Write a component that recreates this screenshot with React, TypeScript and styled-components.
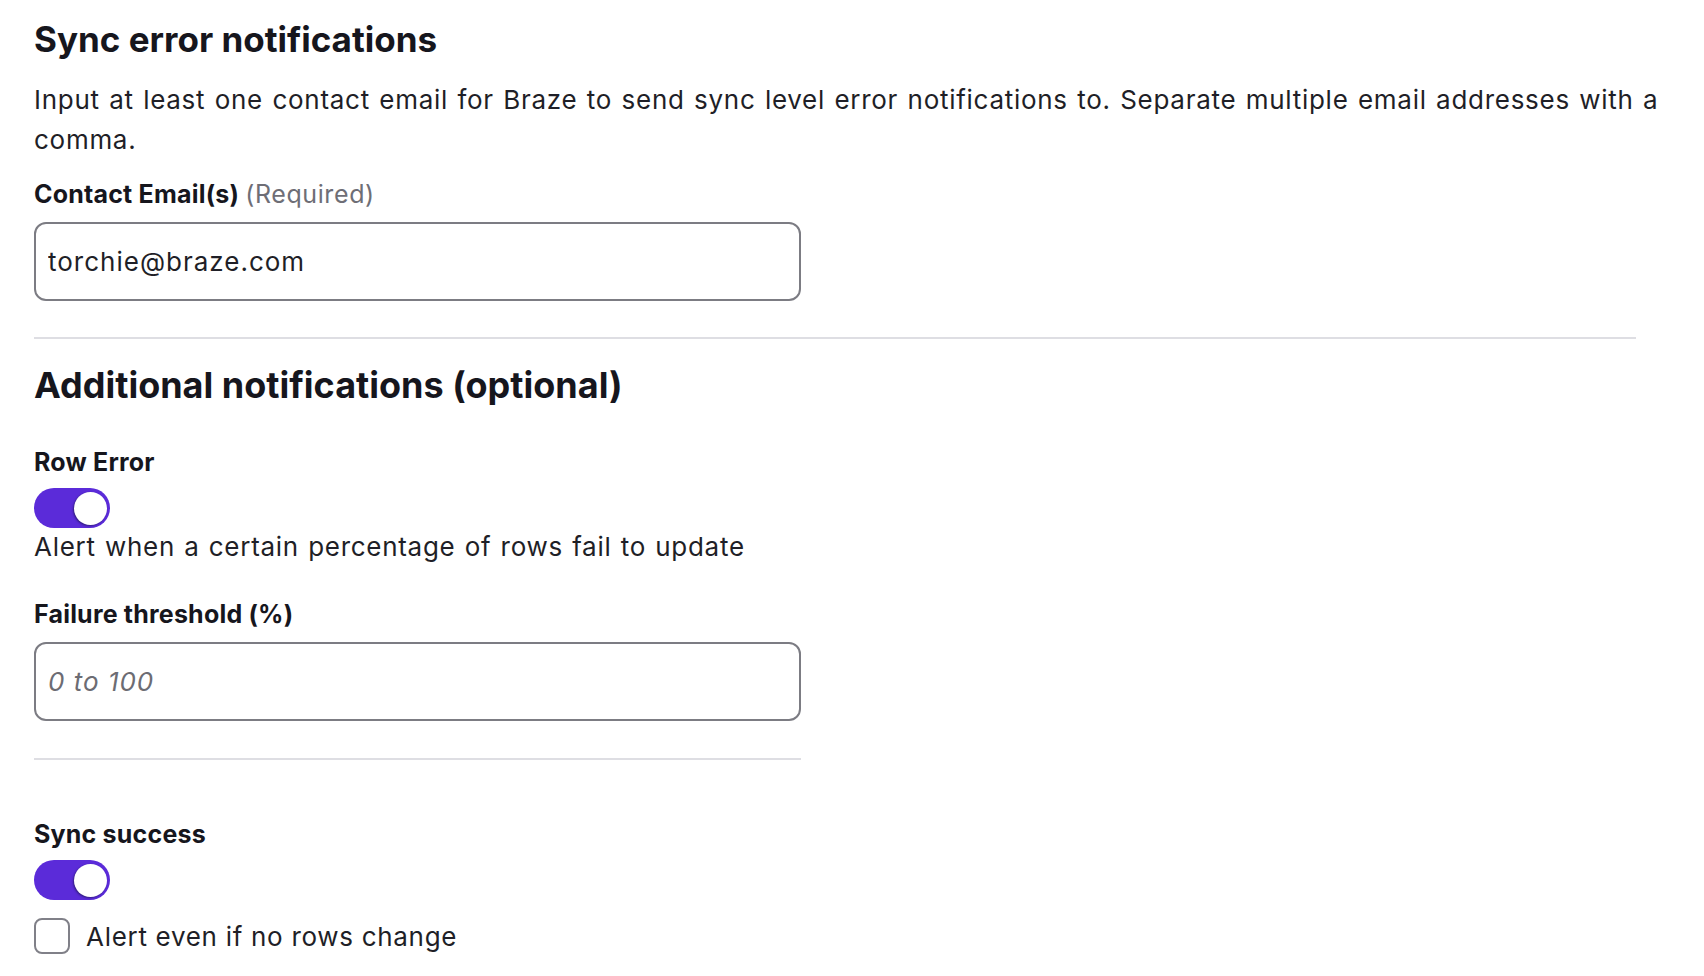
import React from 'react';
import styled, { createGlobalStyle } from 'styled-components';

const GlobalStyle = createGlobalStyle`
  body {
    margin: 0;
    background: #ffffff;
    font-family: Inter, "Noto Sans", "Liberation Sans", sans-serif;
    color: #1c1c24;
  }
`;

const Page = styled.div`
  padding: 18px 20px 0 34px;
  display: flex;
  flex-direction: column;
  align-items: flex-start;
`;

const Title = styled.h2`
  margin: 0;
  font-size: 35px;
  line-height: 42px;
  font-weight: 700;
  color: #16161d;
`;

const SubTitle = styled.h2`
  margin: 24px 0 0 0;
  font-size: 36px;
  line-height: 44px;
  font-weight: 700;
  color: #16161d;
`;

const Description = styled.p`
  margin: 20px 0 0 0;
  font-size: 26px;
  line-height: 40px;
  letter-spacing: 0.72px;
  word-spacing: 1.4px;
  color: #1f1f27;
`;

const FieldLabel = styled.label<{ $gap: number }>`
  display: block;
  margin-top: ${p => p.$gap}px;
  font-size: 25px;
  line-height: 32px;
  font-weight: 700;
  letter-spacing: 0.2px;
  color: #16161d;
`;

const Hint = styled.span`
  font-weight: 400;
  letter-spacing: 0.6px;
  color: #6e6e76;
`;

const TextInput = styled.input`
  box-sizing: border-box;
  margin-top: 12px;
  width: 767px;
  height: 79px;
  padding: 0 12px;
  border: 2px solid #7c7c83;
  border-radius: 12px;
  font-family: inherit;
  font-size: 26px;
  letter-spacing: 1px;
  color: #1f1f27;
  background: #fff;
  outline: none;

  &::placeholder {
    font-style: italic;
    color: #6c6c73;
  }
`;

const Divider = styled.hr<{ $full?: boolean; $top: number }>`
  box-sizing: border-box;
  align-self: ${p => (p.$full ? 'stretch' : 'flex-start')};
  width: ${p => (p.$full ? 'auto' : '767px')};
  margin: ${p => p.$top}px ${p => (p.$full ? 48 : 0)}px 0 0;
  border: none;
  height: 2px;
  background: #dedee3;
`;

const Track = styled.div<{ $on: boolean }>`
  box-sizing: border-box;
  margin-top: 10px;
  width: 76px;
  height: 40px;
  border-radius: 20px;
  padding: 3px;
  background: ${p => (p.$on ? '#5b2bd9' : '#c4c4cc')};
  display: flex;
  justify-content: ${p => (p.$on ? 'flex-end' : 'flex-start')};
  align-items: center;
`;

const Knob = styled.div`
  width: 33px;
  height: 33px;
  border-radius: 50%;
  background: #ffffff;
  box-shadow: -1px 1px 2px rgba(20, 20, 60, 0.55);
`;

const HelpText = styled.div`
  margin-top: 3px;
  font-size: 26px;
  line-height: 32px;
  letter-spacing: 0.72px;
  word-spacing: 1.2px;
  color: #1f1f27;
`;

const CheckRow = styled.label`
  margin-top: 18px;
  display: flex;
  align-items: flex-start;
  gap: 16px;
`;

const CheckBox = styled.span`
  box-sizing: border-box;
  width: 36px;
  height: 36px;
  border: 2px solid #808088;
  border-radius: 8px;
  background: #fff;
`;

const CheckText = styled.span`
  margin-top: 3px;
  font-size: 26px;
  line-height: 32px;
  letter-spacing: 0.7px;
  color: #1f1f27;
`;

function Switch({ on }: { on: boolean }) {
  return (
    <Track $on={on} role="switch" aria-checked={on}>
      <Knob />
    </Track>
  );
}

export default function App() {
  return (
    <>
      <GlobalStyle />
      <Page>
        <Title>Sync error notifications</Title>
        <Description>
          Input at least one contact email for Braze to send sync level error notifications to. Separate multiple email
          addresses with a comma.
        </Description>
        <FieldLabel $gap={18}>
          Contact Email(s) <Hint>(Required)</Hint>
        </FieldLabel>
        <TextInput defaultValue="torchie@braze.com" />

        <Divider $full $top={36} />

        <SubTitle>Additional notifications (optional)</SubTitle>

        <FieldLabel $gap={39}>Row Error</FieldLabel>
        <Switch on />
        <HelpText>Alert when a certain percentage of rows fail to update</HelpText>

        <FieldLabel $gap={35}>Failure threshold (%)</FieldLabel>
        <TextInput placeholder="0 to 100" />

        <Divider $top={37} />

        <FieldLabel $gap={58}>Sync success</FieldLabel>
        <Switch on />
        <CheckRow>
          <CheckBox />
          <CheckText>Alert even if no rows change</CheckText>
        </CheckRow>
      </Page>
    </>
  );
}
